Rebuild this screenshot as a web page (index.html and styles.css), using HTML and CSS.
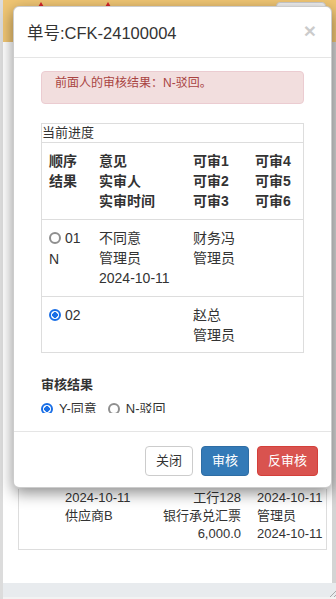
FILE: index.html
```html
<!DOCTYPE html>
<html lang="zh-CN">
<head>
<meta charset="utf-8">
<title>审核</title>
<link rel="stylesheet" href="styles.css">
</head>
<body>
<div class="page">
  <div class="lstrip"></div>
  <div class="main">
    <div class="topbar">
      <span class="mark mark-a"></span>
      <span class="mark mark-b"></span>
      <span class="topbtn">已提交</span>
    </div>
    <div class="mid">
      <div class="content">
        <div class="bgtable">
          <div class="bgrow"><span>2024-10-11</span><span class="r">工行128</span><span class="c">2024-10-11</span></div>
          <div class="bgrow"><span>供应商B</span><span class="r">银行承兑汇票</span><span class="c">管理员</span></div>
          <div class="bgrow"><span></span><span class="r">6,000.0</span><span class="c">2024-10-11</span></div>
        </div>
      </div>
      <div class="rstrip"></div>
    </div>
    <div class="statusbar"><span class="grip"></span></div>
    <div class="footline"></div>
  </div>

  <div class="modal">
    <div class="modal-header">
      <h4 class="modal-title">单号:CFK-24100004</h4>
      <span class="close">×</span>
    </div>
    <div class="modal-body">
      <div class="scroll">
        <div class="alert">前面人的审核结果：N-驳回。</div>
        <div class="progress">
          <div class="caption">当前进度</div>
          <div class="row head">
            <div class="cell">顺序<br>结果</div>
            <div class="cell">意见<br>实审人<br>实审时间</div>
            <div class="cell">可审1<br>可审2<br>可审3</div>
            <div class="cell">可审4<br>可审5<br>可审6</div>
          </div>
          <div class="row">
            <div class="cell"><span class="seq"><input type="radio" class="radio" name="step">01</span><br>N</div>
            <div class="cell">不同意<br>管理员<br>2024-10-11</div>
            <div class="cell">财务冯<br>管理员</div>
            <div class="cell"></div>
          </div>
          <div class="row last">
            <div class="cell"><span class="seq"><input type="radio" class="radio" name="step" checked>02</span></div>
            <div class="cell"></div>
            <div class="cell">赵总<br>管理员</div>
            <div class="cell"></div>
          </div>
        </div>
        <div class="result-label">审核结果</div>
        <div class="result-opts">
          <label class="opt"><input type="radio" class="radio" name="res" checked>Y-同意</label>
          <label class="opt"><input type="radio" class="radio" name="res">N-驳回</label>
        </div>
      </div>
    </div>
    <div class="modal-footer">
      <button class="btn btn-default">关闭</button>
      <button class="btn btn-primary">审核</button>
      <button class="btn btn-danger">反审核</button>
    </div>
  </div>
</div>
</body>
</html>
```
FILE: styles.css
```css
* { box-sizing: border-box; }
html, body { margin: 0; padding: 0; }
body {
  font-family: "Liberation Sans", "Noto Sans CJK SC", sans-serif;
  color: #333;
  background: #fff;
}
.page {
  position: relative;
  display: flex;
  width: 336px;
  height: 599px;
  overflow: hidden;
}
.lstrip { width: 3px; background: #dcdcdc; }
.main { flex: 1; display: flex; flex-direction: column; }
.topbar {
  height: 42px;
  background: #f0c674;
  display: flex;
  align-items: flex-start;
  padding-left: 35px;
  padding-right: 10px;
}
.mark {
  width: 0; height: 0;
  margin-top: 2px;
  border-left: 3px solid transparent;
  border-right: 3px solid transparent;
  border-bottom: 5px solid #d8262a;
}
.mark-b { margin-left: 61px; }
.topbtn {
  margin-left: auto;
  margin-top: 2px;
  height: 24px;
  padding: 2px 6px;
  font-size: 12px;
  background: #f2f2f2;
  border: 1px solid #ccc;
  border-radius: 4px;
  color: #222;
}
.mid { flex: 1; display: flex; }
.content {
  flex: 1;
  background: #fff;
  display: flex;
  flex-direction: column;
  justify-content: flex-end;
  padding: 0 5px 33px 15px;
}
.rstrip { width: 4px; background: #d4d4d4; }
.bgtable {
  border: 1px solid #ddd;
  border-top: none;
  padding: 0 0 6px 46px;
  font-size: 13px;
  line-height: 18px;
  color: #333;
}
.bgrow {
  display: grid;
  grid-template-columns: 85px 91px 1fr;
}
.bgrow .r { text-align: right; }
.bgrow .c { padding-left: 16px; }
.statusbar {
  height: 14px;
  background: #e8ebee;
  display: flex;
  justify-content: flex-end;
  align-items: flex-end;
}
.grip {
  width: 6px; height: 6px;
  background: linear-gradient(135deg, transparent 45%, #aaa 45%, #aaa 55%, transparent 55%, transparent 75%, #aaa 75%, #aaa 85%, transparent 85%);
}
.footline { height: 2px; background: #f2f2f2; }

/* modal */
.modal {
  position: absolute;
  left: 13px;
  top: 6px;
  width: 319px;
  background: #fff;
  border: 1px solid rgba(0,0,0,.2);
  border-radius: 6px;
  box-shadow: 0 5px 15px rgba(0,0,0,.45);
}
.modal-header {
  display: flex;
  align-items: flex-start;
  justify-content: space-between;
  padding: 16px 15px 14px 13px;
  border-bottom: 1px solid #e5e5e5;
}
.modal-title {
  margin: 0;
  font-size: 16.5px;
  font-weight: normal;
  line-height: 20px;
  color: #333;
}
.close {
  font-size: 21px;
  font-weight: bold;
  line-height: 14px;
  color: #000;
  opacity: .2;
  margin-top: 1px;
}
.modal-body { padding: 13px 27px 18px 27px; }
.scroll { height: 342px; overflow: hidden; }
.alert {
  background: #f2dede;
  border: 1px solid #ebccd1;
  border-radius: 4px;
  color: #a94442;
  font-size: 12px;
  line-height: 18px;
  padding: 2px 13px 11px;
  margin-bottom: 19px;
}
.progress {
  border: 1px solid #ddd;
  font-size: 14px;
  line-height: 20px;
}
.caption {
  font-size: 13px;
  line-height: 18px;
  padding: 0 0 0 0;
  border-bottom: 1px solid #ddd;
}
.row {
  display: grid;
  grid-template-columns: 50px 94px 62px 1fr;
  padding: 8px 0;
  border-bottom: 1px solid #ddd;
}
.row.last { border-bottom: none; padding-bottom: 7px; }
.row.head { font-weight: bold; }
.cell { padding-left: 7px; white-space: nowrap; }
.seq { display: inline-flex; align-items: center; }
.radio {
  appearance: none;
  -webkit-appearance: none;
  width: 12px;
  height: 12px;
  margin: 0 4px 0 0;
  border: 2px solid #8f8f8f;
  border-radius: 50%;
  background: #fff;
  flex: none;
}
.radio:checked {
  border-color: #1a6fe6;
  background: radial-gradient(circle, #1a6fe6 0 2.6px, #fff 3px);
}
.result-label {
  margin-top: 22px;
  font-size: 13px;
  font-weight: bold;
  line-height: 20px;
}
.result-opts {
  margin-top: 4px;
  display: flex;
  gap: 11px;
  font-size: 13px;
  line-height: 20px;
}
.opt { display: inline-flex; align-items: center; }
.opt .radio { margin-right: 6px; }
.modal-footer {
  border-top: 1px solid #e5e5e5;
  padding: 14px 13px 11px;
  display: flex;
  justify-content: flex-end;
  gap: 8px;
}
.btn {
  font-family: inherit;
  font-size: 13px;
  line-height: 20px;
  padding: 4px 10px;
  border: 1px solid transparent;
  border-radius: 4px;
  margin: 0;
}
.btn-default { background: #fff; border-color: #ccc; color: #333; }
.btn-primary { background: #337ab7; border-color: #2e6da4; color: #fff; }
.btn-danger { background: #d9534f; border-color: #d43f3a; color: #fff; }
```
